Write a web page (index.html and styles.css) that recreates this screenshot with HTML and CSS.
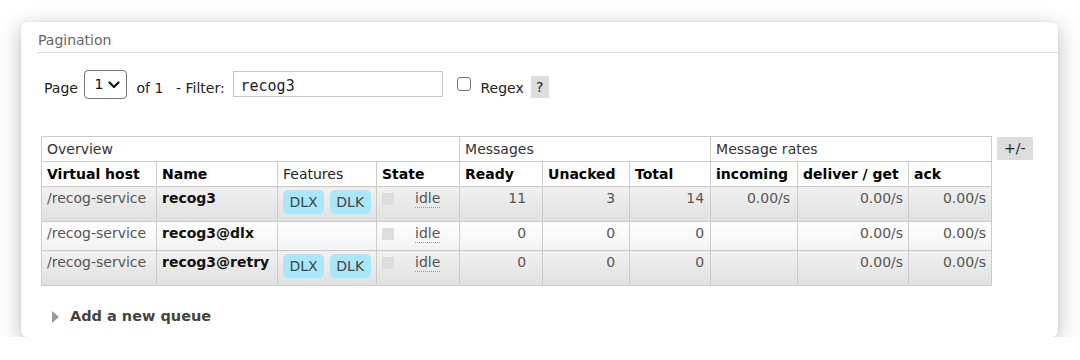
FILE: index.html
```html
<!DOCTYPE html>
<html>
<head>
<meta charset="utf-8">
<title>Queues</title>
<link rel="stylesheet" href="styles.css">
</head>
<body>
<div class="card">
  <h2 class="section-title">Pagination</h2>
  <div class="filter-row">
    <span class="lbl page">Page</span>
    <div class="select"><span class="sel-val">1</span><svg class="chev" width="12" height="8" viewBox="0 0 12 8"><path d="M1.5 1.5 L6 6 L10.5 1.5" fill="none" stroke="#111" stroke-width="2.2" stroke-linecap="round" stroke-linejoin="round"/></svg></div>
    <span class="lbl of">of 1</span>
    <span class="lbl filter">- Filter:</span>
    <input class="filter-input" type="text" value="recog3">
    <input class="check" type="checkbox">
    <span class="lbl regex">Regex</span>
    <span class="help">?</span>
  </div>
  <div class="table-wrap">
    <table class="list">
      <colgroup>
        <col class="w-vhost"><col class="w-name"><col class="w-feat"><col class="w-state">
        <col class="w-ready"><col class="w-unacked"><col class="w-total">
        <col class="w-in"><col class="w-deliver"><col class="w-ack">
      </colgroup>
      <thead>
        <tr class="group">
          <th colspan="4">Overview</th>
          <th colspan="3">Messages</th>
          <th colspan="3">Message rates</th>
        </tr>
        <tr class="cols">
          <th>Virtual host</th>
          <th>Name</th>
          <th class="normal">Features</th>
          <th>State</th>
          <th>Ready</th>
          <th>Unacked</th>
          <th>Total</th>
          <th>incoming</th>
          <th>deliver / get</th>
          <th>ack</th>
        </tr>
      </thead>
      <tbody>
        <tr class="alt1 tall">
          <td>/recog-service</td>
          <td class="name">recog3</td>
          <td><div class="badges"><span class="badge">DLX</span><span class="badge">DLK</span></div></td>
          <td><div class="state"><span class="dot"></span><span class="idle">idle</span></div></td>
          <td class="num pr-ready">11</td>
          <td class="num pr-unacked">3</td>
          <td class="num pr-total">14</td>
          <td class="num pr-in">0.00/s</td>
          <td class="num">0.00/s</td>
          <td class="num">0.00/s</td>
        </tr>
        <tr class="alt2 short">
          <td>/recog-service</td>
          <td class="name">recog3@dlx</td>
          <td></td>
          <td><div class="state"><span class="dot"></span><span class="idle">idle</span></div></td>
          <td class="num pr-ready">0</td>
          <td class="num pr-unacked">0</td>
          <td class="num pr-total">0</td>
          <td class="num pr-in"></td>
          <td class="num">0.00/s</td>
          <td class="num">0.00/s</td>
        </tr>
        <tr class="alt1 tall">
          <td>/recog-service</td>
          <td class="name">recog3@retry</td>
          <td><div class="badges"><span class="badge">DLX</span><span class="badge">DLK</span></div></td>
          <td><div class="state"><span class="dot"></span><span class="idle">idle</span></div></td>
          <td class="num pr-ready">0</td>
          <td class="num pr-unacked">0</td>
          <td class="num pr-total">0</td>
          <td class="num pr-in"></td>
          <td class="num">0.00/s</td>
          <td class="num">0.00/s</td>
        </tr>
      </tbody>
    </table>
    <span class="toggle">+/-</span>
  </div>
  <div class="add"><span class="tri"></span><span>Add a new queue</span></div>
</div>
</body>
</html>
```

FILE: styles.css
```css
* { box-sizing: border-box; }

body {
  margin: 0;
  background: #fff;
  font-family: "DejaVu Sans", Verdana, sans-serif;
  color: #222;
}

.card {
  margin: 22px 0 0 21px;
  width: 1037px;
  height: 315px;
  background: #fff;
  border-radius: 6px;
  box-shadow: 0 5px 22px rgba(0, 0, 0, 0.26), 0 0 3px rgba(0, 0, 0, 0.08);
  overflow: hidden;
}

.section-title {
  margin: 0 0 0 16px;
  padding: 10px 0 4px 1px;
  font-size: 14px;
  font-weight: normal;
  line-height: 16px;
  color: #666;
  border-bottom: 1px solid #ddd;
}

.filter-row {
  display: flex;
  align-items: flex-start;
  margin: 17px 0 0 23px;
  height: 29px;
  font-size: 14px;
  color: #222;
}

.lbl {
  line-height: 17px;
  margin-top: 10px;
  white-space: nowrap;
}

.page { width: 40px; }

.select {
  display: flex;
  align-items: center;
  width: 43px;
  height: 29px;
  padding-left: 9.5px;
  border: 1px solid #767676;
  border-radius: 4px;
  background: #fff;
}

.sel-val { line-height: 17px; color: #111; }
.chev { margin-left: 5px; }

.of { margin-left: 9.5px; width: 39.5px; }
.filter { width: 57px; }

.filter-input {
  width: 210px;
  height: 26px;
  margin: 1px 0 0 0;
  padding: 4px 0 0 6.5px;
  border: 1px solid #c6c6c6;
  border-radius: 0;
  font-family: "DejaVu Sans Mono", monospace;
  font-size: 15px;
  color: #222;
  background: #fff;
  outline: none;
}

.check {
  appearance: none;
  -webkit-appearance: none;
  width: 14px;
  height: 14px;
  margin: 7px 0 0 14px;
  border: 1px solid #767676;
  border-radius: 3px;
  background: #fff;
}

.regex { margin-left: 9.5px; width: 50px; }

.help {
  margin: 6px 0 0 0;
  height: 22px;
  line-height: 22px;
  padding: 0 5.5px;
  background: #ddd;
  color: #222;
}

.table-wrap {
  display: flex;
  align-items: flex-start;
  margin: 37px 0 0 20px;
}

.list {
  border-collapse: collapse;
  table-layout: fixed;
  width: 950px;
  font-size: 14px;
}

.w-vhost { width: 115px; }
.w-name { width: 121px; }
.w-feat { width: 99px; }
.w-state { width: 83px; }
.w-ready { width: 83px; }
.w-unacked { width: 87px; }
.w-total { width: 81px; }
.w-in { width: 87px; }
.w-deliver { width: 111px; }
.w-ack { width: 83px; }

.list th,
.list td {
  border: 1px solid #ccc;
  padding: 3px 5px;
  line-height: 17px;
  vertical-align: top;
  text-align: left;
  white-space: nowrap;
}

.list th {
  padding-top: 4px;
  background: #fff;
  color: #000;
}

.group { height: 24px; }
.group th { font-weight: normal; color: #333; }
.cols { height: 24px; }
.cols th { font-weight: bold; }
.cols th.normal { font-weight: normal; color: #222; }

.tall { height: 35px; }
.short { height: 29px; }

.list td { color: #555; }
.alt1 td { background: linear-gradient(#f2f2f2, #e1e1e1); }
.alt2 td { background: linear-gradient(#ffffff, #f2f2f2); }

.list td.name { font-weight: bold; color: #111; }
.list td.num { text-align: right; }
.list td.pr-ready { padding-right: 16px; }
.list td.pr-unacked { padding-right: 14px; }
.list td.pr-total { padding-right: 6px; }
.list td.pr-in { padding-right: 7px; }

.badges { display: flex; gap: 6px; }
.badge {
  height: 24px;
  line-height: 24px;
  padding: 0 6.4px;
  border-radius: 5px;
  background: #abe7fa;
  color: #444;
}

.state { display: flex; align-items: flex-start; }
.dot {
  width: 12px;
  height: 12px;
  margin: 3px 21px 0 0;
  background: #ddd;
}
.idle { border-bottom: 1px dotted #999; color: #555; }

.toggle {
  margin: 1px 0 0 5px;
  height: 23px;
  line-height: 23px;
  padding: 0 7px;
  background: #ddd;
  color: #222;
  font-size: 14px;
}

.add {
  display: flex;
  align-items: center;
  margin: 22px 0 0 31px;
  font-size: 14.5px;
  font-weight: bold;
  line-height: 17px;
  color: #444;
}

.tri {
  width: 0;
  height: 0;
  border-left: 7px solid #999;
  border-top: 6px solid transparent;
  border-bottom: 6px solid transparent;
  margin-right: 11px;
}
```
